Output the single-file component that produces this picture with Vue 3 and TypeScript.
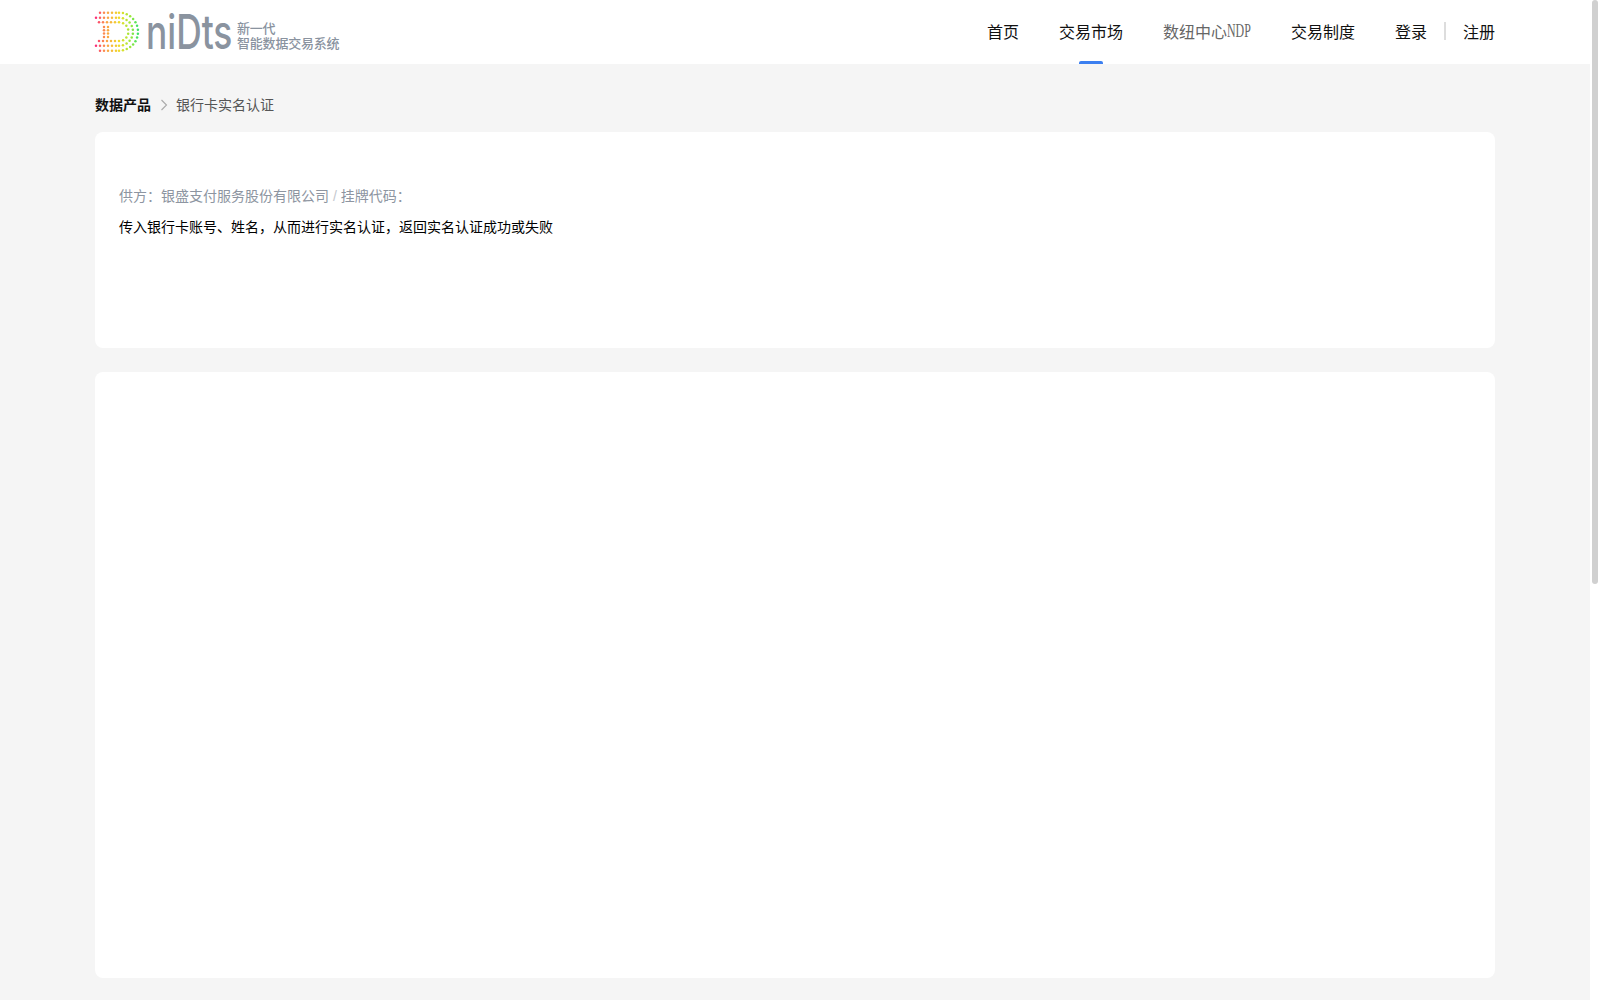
<script setup lang="ts">
interface Dot { x: number; y: number; c: string }

const stops: [number, number[]][] = [
  [96, [250, 50, 120]],
  [106, [252, 160, 70]],
  [120, [238, 222, 40]],
  [131, [150, 232, 60]],
  [139, [50, 225, 110]],
]

function colorAt(x: number): string {
  for (let i = 1; i < stops.length; i++) {
    if (x <= stops[i][0]) {
      const [x0, a] = stops[i - 1]
      const [x1, b] = stops[i]
      const t = Math.max(0, (x - x0) / (x1 - x0))
      return `rgb(${a.map((v, k) => Math.round(v + (b[k] - v) * t)).join(',')})`
    }
  }
  return 'rgb(50,225,110)'
}

const cx = 119
const cy = 31.7

function ring(r: number, startX: number, step: number): Dot[] {
  const out: Dot[] = []
  for (let x = startX; x < cx; x += step) {
    out.push({ x, y: cy - r, c: colorAt(x) })
    out.push({ x, y: cy + r, c: colorAt(x) })
  }
  const n = Math.round((Math.PI * r) / step)
  for (let i = 0; i <= n; i++) {
    const a = -Math.PI / 2 + (Math.PI * i) / n
    const x = cx + r * Math.cos(a)
    out.push({ x, y: cy + r * Math.sin(a), c: colorAt(x) })
  }
  return out
}

function strip(x: number): Dot[] {
  const out: Dot[] = []
  for (let y = 27; y <= 37; y += 3.3) out.push({ x, y, c: colorAt(x) })
  return out
}

const dots: Dot[] = [
  ...ring(19, 100, 4),
  ...ring(14, 96, 4),
  ...ring(9.4, 99, 4),
  ...strip(104),
  ...strip(108),
]

const navItems = [
  { label: '首页', active: false, muted: false },
  { label: '交易市场', active: true, muted: false },
  { label: '数纽中心', suffix: 'NDP', active: false, muted: true },
  { label: '交易制度', active: false, muted: false },
]
</script>

<template>
  <div class="shell">
    <div class="page">
      <header class="header">
        <div class="bar">
          <div class="logo">
            <svg class="mark" viewBox="95 0 142 64" width="142" height="64">
              <circle v-for="(d, i) in dots" :key="i" :cx="d.x" :cy="d.y" r="1.25" :fill="d.c" />
              <text class="word" transform="translate(146 49) scale(0.72 1)" textLength="120" lengthAdjust="spacingAndGlyphs">niDts</text>
            </svg>
            <div class="slogan">
              <span>新一代</span>
              <span>智能数据交易系统</span>
            </div>
          </div>
          <nav class="nav">
            <a
              v-for="item in navItems"
              :key="item.label"
              class="nav-item"
              :class="{ active: item.active, muted: item.muted }"
            >{{ item.label }}<span v-if="item.suffix" class="suffix"><span class="suffix-inner">{{ item.suffix }}</span></span></a>
            <div class="auth">
              <a class="auth-link">登录</a>
              <i class="divider"></i>
              <a class="auth-link">注册</a>
            </div>
          </nav>
        </div>
      </header>

      <main class="main">
        <div class="crumbs">
          <strong class="crumb-root">数据产品</strong>
          <svg class="chevron" viewBox="0 0 8 12" width="8" height="12">
            <path d="M1.5 1 L6.5 6 L1.5 11" fill="none" stroke="#aaa" stroke-width="1.1" />
          </svg>
          <span class="crumb-current">银行卡实名认证</span>
        </div>

        <section class="card intro">
          <p class="supplier">供方：银盛支付服务股份有限公司 <span class="slash">/</span> 挂牌代码：</p>
          <p class="desc">传入银行卡账号、姓名，从而进行实名认证，返回实名认证成功或失败</p>
        </section>

        <section class="card detail"></section>
      </main>
    </div>

    <div class="rail"><div class="thumb"></div></div>
  </div>
</template>

<style scoped>
.shell {
  display: flex;
  height: 1000px;
  overflow: hidden;
  font-family: "Liberation Sans", "Noto Sans CJK SC", sans-serif;
  color: #111;
}
.page {
  flex: 1;
  min-width: 0;
  background: #f5f5f5;
}
.rail {
  width: 10px;
  background: #fff;
  padding-left: 2px;
  box-sizing: border-box;
}
.thumb {
  width: 6px;
  height: 584px;
  background: #d0d0d0;
  border-radius: 3px;
}
.header {
  height: 64px;
  background: #fff;
}
.bar {
  width: 1400px;
  height: 64px;
  margin: 0 auto;
  display: flex;
  justify-content: space-between;
}
.logo {
  display: flex;
  align-items: center;
}
.mark {
  display: block;
  overflow: visible;
}
.word {
  font-family: "Inter", sans-serif;
  font-size: 48px;
  font-weight: 500;
  fill: #8a939f;
}
.slogan {
  display: flex;
  flex-direction: column;
  font-size: 13px;
  line-height: 15px;
  letter-spacing: -0.2px;
  font-weight: 500;
  color: #8a939f;
  padding-top: 8px;
}
.nav {
  display: flex;
  align-items: stretch;
  gap: 40px;
  font-size: 16px;
}
.nav-item {
  position: relative;
  display: flex;
  align-items: center;
  white-space: nowrap;
  padding-bottom: 3px;
}
.nav-item.muted {
  color: #666;
}
.nav-item.active::after {
  content: "";
  position: absolute;
  left: 50%;
  bottom: 0;
  width: 24px;
  height: 3px;
  margin-left: -12px;
  border-radius: 2px 2px 0 0;
  background: #3b7ff0;
}
.suffix {
  display: inline-block;
  width: 24px;
  height: 20px;
  line-height: 20px;
}
.suffix-inner {
  display: inline-block;
  font-family: "Liberation Serif", serif;
  font-size: 18px;
  transform: scaleX(0.66);
  transform-origin: left center;
}
.auth {
  display: flex;
  align-items: center;
  padding-bottom: 3px;
}
.auth-link {
  white-space: nowrap;
}
.divider {
  width: 2px;
  height: 18px;
  margin: 0 17px;
  background: #ddd;
}
.main {
  width: 1400px;
  margin: 0 auto;
}
.crumbs {
  height: 68px;
  display: flex;
  align-items: center;
  font-size: 14px;
  line-height: 20px;
  padding: 16px 0 2px;
  box-sizing: border-box;
}
.crumb-root {
  color: #111;
  font-weight: 700;
}
.chevron {
  margin: 0 8px 0 9px;
}
.crumb-current {
  color: #555;
}
.card {
  background: #fff;
  border-radius: 8px;
}
.intro {
  height: 216px;
  padding: 54px 24px 0;
  box-sizing: border-box;
  font-size: 14px;
  line-height: 20px;
}
.supplier {
  margin: 0;
  color: #8d95a1;
}
.slash {
  color: #c4c8ce;
}
.desc {
  margin: 11px 0 0;
  color: #000;
}
.detail {
  height: 606px;
  margin-top: 24px;
}
</style>
